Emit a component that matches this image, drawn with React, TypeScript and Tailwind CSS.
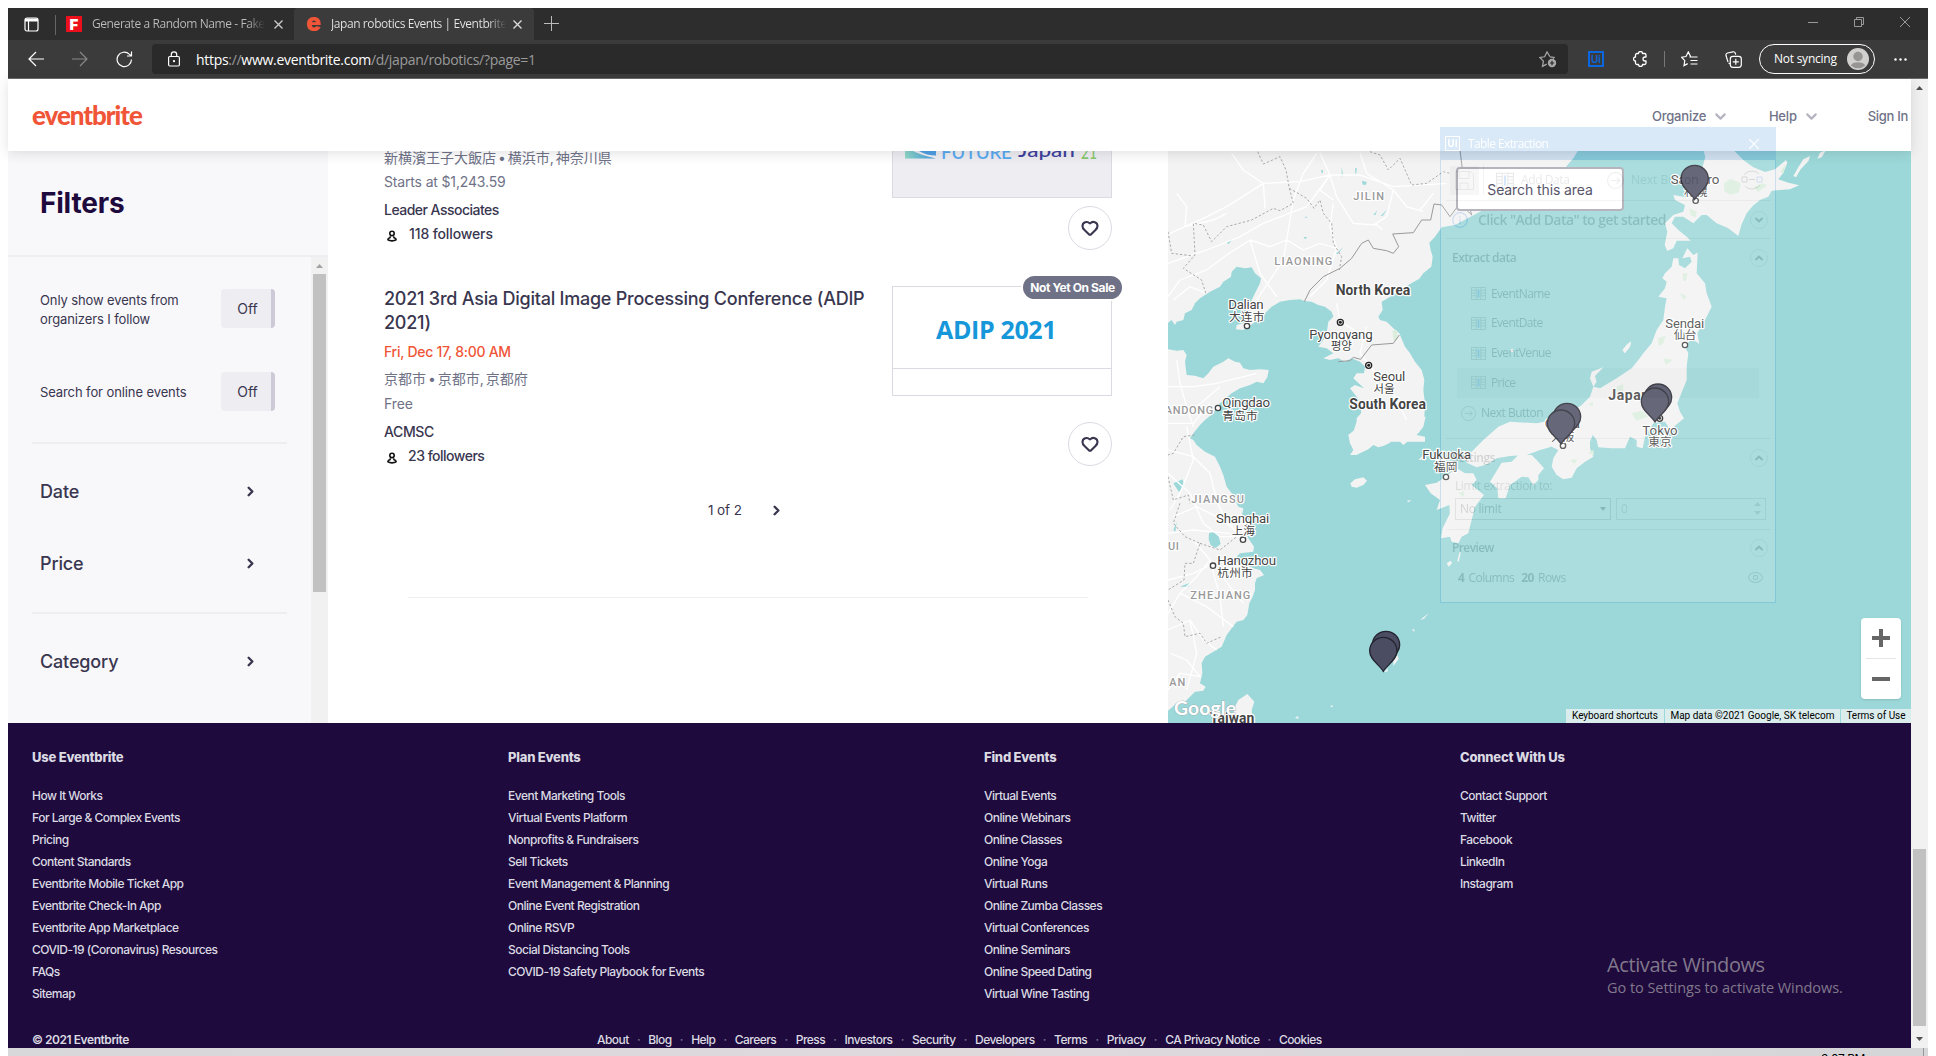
import React from "react";
import { Heart, ChevronRight, ChevronDown, ChevronUp, Eye } from "lucide-react";

const ui = "font-['Open_Sans','Noto_Sans',sans-serif]";

function BrowserChrome() {
  return (
    <div className={`${ui} shrink-0 text-white`}>
      <div className="flex h-8 bg-[#2d2d2d]">
        <div className="flex w-[47px] items-center justify-end border-0">
          <svg className="mr-4 h-[15px] w-[15px]" viewBox="0 0 15 15" fill="none" stroke="#fff" strokeWidth="1.2">
            <rect x="1" y="1" width="13" height="13" rx="2" />
            <path d="M1 3h13" strokeWidth="3" />
            <path d="M4.500 4v10" />
          </svg>
        </div>
        <div className="mt-[7px] h-5 w-px bg-[#666]" />
        <div className="flex w-[238px] items-center pl-[10px]">
          <span className="flex h-4 w-4 items-center justify-center bg-[#ec0f1c] font-['Inter',sans-serif] text-[15px] font-black leading-none">F</span>
          <span className="ml-[10px] w-[173px] overflow-hidden whitespace-nowrap bg-gradient-to-r from-[#bdbdbd] from-90% to-[#2d2d2d] bg-clip-text text-[12px] tracking-[-0.42px] text-transparent">Generate a Random Name - Fake</span>
          <svg className="ml-[9px] h-[9px] w-[9px]" viewBox="0 0 9 9" stroke="#ccc" strokeWidth="1.3"><path d="M.5.5l8 8M8.500.5l-8 8" /></svg>
        </div>
        <div className="flex w-[240px] items-center rounded-t bg-[#3b3b3b] pl-3">
          <svg className="h-[16px] w-[15px]" viewBox="0 0 15 16">
            <text x="0" y="15" textLength="15" lengthAdjust="spacingAndGlyphs" fontFamily="Inter, sans-serif" fontWeight="900" fontSize="25" fill="#f05537">e</text>
          </svg>
          <span className="ml-[10px] w-[175px] overflow-hidden whitespace-nowrap bg-gradient-to-r from-[#e8e8e8] from-90% to-[#3b3b3b] bg-clip-text text-[12px] tracking-[-0.42px] text-transparent">Japan robotics Events | Eventbrite</span>
          <svg className="ml-[7px] h-[9px] w-[9px]" viewBox="0 0 9 9" stroke="#ddd" strokeWidth="1.300"><path d="M.5.5l8 8M8.500.5l-8 8" /></svg>
        </div>
        <svg className="ml-[10px] mt-[8px] h-[15px] w-[15px]" viewBox="0 0 15 15" stroke="#bbb"><path d="M7.500 0v15M0 7.500h15" /></svg>
        <div className="ml-auto mr-[18px] flex items-center gap-[36px] pb-1">
          <svg className="h-[10px] w-[10px]" viewBox="0 0 10 10" stroke="#999"><path d="M0 5.500h10" /></svg>
          <svg className="h-[10px] w-[10px]" viewBox="0 0 10 10" fill="none" stroke="#999"><path d="M.5 2.500h7v7h-7zM2.500 2.500v-2h7v7h-2" /></svg>
          <svg className="h-[10px] w-[10px]" viewBox="0 0 10 10" stroke="#999"><path d="M0 0l10 10M10 0L0 10" /></svg>
        </div>
      </div>
      <div className="flex h-[39px] items-start border-b border-[#6b6b6b] bg-[#3b3b3b] pt-1">
        <div className="flex h-[30px] w-[144px] items-center pl-5">
          <svg className="h-4 w-4" viewBox="0 0 16 16" fill="none" stroke="#fff" strokeWidth="1.200"><path d="M16 8H1M8 1L1 8l7 7" /></svg>
          <svg className="ml-7 h-4 w-4" viewBox="0 0 16 16" fill="none" stroke="#888" strokeWidth="1.200"><path d="M0 8h15M8 1l7 7-7 7" /></svg>
          <svg className="ml-7 h-[17px] w-[17px]" viewBox="0 0 17 17" fill="none" stroke="#fff" strokeWidth="1.200"><path d="M15.500 8.500a7.200 7.200 0 1 1-2.300-5.400L15.500 5M15.500.5V5H11" /></svg>
        </div>
        <div className="flex h-[30px] w-[1416px] items-center rounded bg-[#2a2a2a] pl-4 pr-[11px]">
          <svg className="h-4 w-3" viewBox="0 0 12 16" fill="none" stroke="#fff" strokeWidth="1.200"><rect x=".6" y="5.500" width="10.800" height="9.500" rx="1.200" /><path d="M3.300 5.500V3.500a2.700 2.700 0 0 1 5.400 0v2" /><circle cx="6" cy="10.200" r=".5" fill="#fff" /></svg>
          <span className="ml-4 whitespace-nowrap text-[14px] tracking-[-0.3px] text-[#9a9a9a]"><span className="text-white">https</span>://<span className="text-white">www.eventbrite.com</span>/d/japan/robotics/?page=1</span>
          <svg className="ml-auto h-[17px] w-[18px]" viewBox="0 0 18 17" fill="none" stroke="#aaa" strokeWidth="1.200"><path d="M11 5.800L8 .9 5.600 5.800.8 6.500l3.600 3.700-.9 5.200 4.200-2.300M11 5.800l4 .7-1 1" /><circle cx="13" cy="12" r="4.200" fill="#aaa" stroke="none" /><path d="M13 9.800v4.400M10.800 12h4.400" stroke="#2a2a2a" /></svg>
        </div>
        <div className="flex h-[30px] flex-1 items-center">
          <span className="ml-5 flex h-4 w-4 items-center justify-center border-2 border-[#0a67df] font-['Inter',sans-serif] text-[10px] font-semibold text-[#0a67df]">Ui</span>
          <svg className="ml-[29px] h-[16px] w-[15px]" viewBox="0 0 15 16" fill="none" stroke="#fff" strokeWidth="1.300" strokeLinejoin="round"><path d="M4 2.500h1.500a2 2 0 0 1 4 0h2a1.500 1.500 0 0 1 1.500 1.500v2h-1a1.900 1.900 0 0 0 0 4h1v2a1.500 1.500 0 0 1-1.500 1.500h-2a2 2 0 0 1-4 0H4A1.500 1.500 0 0 1 2.500 12v-2a2 2 0 0 1 0-4V4A1.500 1.500 0 0 1 4 2.500z" /></svg>
          <div className="ml-[16px] h-4 w-px bg-[#777]" />
          <svg className="ml-[16px] h-[17px] w-[17px]" viewBox="0 0 17 17" fill="none" stroke="#fff" strokeWidth="1.200"><path d="M9.600 5.500L7.300.9 5 5.500.6 6.200l3.200 3.400-.8 5 3.700-2M8.500 6h8M9.500 9.500h7M9.500 13h7" /></svg>
          <svg className="ml-[27px] h-[17px] w-[17px]" viewBox="0 0 17 17" fill="none" stroke="#fff" strokeWidth="1.200"><path d="M3 11L1 4.500C.7 3 1 2.500 2.500 2L8 .8c1.500-.3 2 .2 2.400 1.700l.3 1.200M5.500 13l-2-1" /><rect x="5.300" y="5.300" width="11" height="11" rx="2.500" /><path d="M10.800 7.800v6M7.800 10.800h6" /></svg>
          <div className="ml-[17px] flex h-[30px] w-[116px] items-center rounded-full border border-white pl-[14px] text-[12px] tracking-[-0.25px]">
            <span className="whitespace-nowrap">Not syncing</span>
            <svg className="ml-auto mr-[5px] h-[22px] w-[22px]" viewBox="0 0 22 22"><circle cx="11" cy="11" r="11" fill="#d2d0ce" /><circle cx="11" cy="8.500" r="4.700" fill="#979593" /><path d="M3.800 17.500c2-4.200 12.400-4.200 14.400 0a11 11 0 0 1-14.400 0" fill="#979593" /></svg>
          </div>
          <svg className="ml-[19px] h-[3px] w-[13px]" viewBox="0 0 13 3" fill="#fff"><circle cx="1.500" cy="1.500" r="1.200" /><circle cx="6.500" cy="1.500" r="1.200" /><circle cx="11.500" cy="1.500" r="1.200" /></svg>
        </div>
      </div>
    </div>
  );
}

function SiteHeader() {
  return (
    <header className="relative z-10 flex h-[72px] shrink-0 items-center bg-white pt-[3px] text-[13px] font-medium text-[#6f7287] shadow-[0_2px_12px_rgba(40,44,53,0.14)]">
      <span className="ml-6 pb-[4px] font-['Lato',sans-serif] text-[26px] font-black leading-none tracking-[-1.05px] text-[#f05537]">eventbrite</span>
      <span className="ml-auto w-[54px] tracking-[-0.2px]">Organize</span>
      <ChevronDown className="ml-[6px] h-[17px] w-[17px] text-[#b5b3c0]" strokeWidth={3} />
      <span className="ml-[40px] tracking-[-0.2px]">Help</span>
      <ChevronDown className="ml-[6px] h-[17px] w-[17px] text-[#b5b3c0]" strokeWidth={3} />
      <span className="ml-[48px] mr-[3px] tracking-[-0.3px]">Sign In</span>
    </header>
  );
}

function Toggle() {
  return <span className="flex h-[39px] w-[54px] items-center justify-center rounded border-r-4 border-[#cdc9d6] bg-[#eeedf2] pl-[3px] text-[14px] tracking-normal">Off</span>;
}

function FilterRow({ label, className }: { label: string; className: string }) {
  return (
    <div className={`flex items-center pl-8 pr-[53px] text-[18px] font-medium tracking-[-0.15px] ${className}`}>
      {label}
      <ChevronRight className="ml-auto h-[15px] w-[15px]" strokeWidth={3.800} />
    </div>
  );
}

function Filters() {
  return (
    <aside className="flex w-[320px] shrink-0 flex-col bg-[#f8f7fa] text-[#39364f]">
      <div className="flex h-[106px] items-center border-b-2 border-[#eeedf2] pl-8">
        <h2 className="text-[28px] font-bold leading-none tracking-[-0.2px] text-[#1e0a3c]">Filters</h2>
      </div>
      <div className="flex flex-1">
        <div className="flex w-[303px] flex-col">
          <div className="mt-8 flex h-[39px] items-center justify-between pl-8 pr-9 text-[13px] leading-[19px] tracking-[-0.12px]">
            <span className="pt-[3px]">Only show events from<br />organizers I follow</span>
            <Toggle />
          </div>
          <div className="mt-11 flex h-[39px] items-center justify-between pl-8 pr-9 text-[13px] tracking-[-0.1px]">
            <span className="pt-[2px]">Search for online events</span>
            <Toggle />
          </div>
          <div className="ml-6 mt-[31px] h-[2px] w-[255px] bg-[#eeedf2]" />
          <FilterRow label="Date" className="mt-[27px] h-10" />
          <FilterRow label="Price" className="mt-8 h-10" />
          <div className="ml-6 mt-[29px] h-[2px] w-[255px] bg-[#eeedf2]" />
          <FilterRow label="Category" className="mt-[27px] h-10" />
        </div>
        <div className="flex w-[17px] flex-col items-center bg-[#f1f1f1]">
          <svg className="mt-[7px] h-1 w-[7px]" viewBox="0 0 7 4"><path d="M0 4L3.500 0 7 4z" fill="#a3a3a3" /></svg>
          <div className="mt-[6px] h-[318px] w-[13px] bg-[#c1c1c1]" />
        </div>
      </div>
    </aside>
  );
}

function Followers({ children }: { children: React.ReactNode }) {
  return (
    <div className="-mt-px flex h-6 items-center font-medium">
      <svg className="ml-[3px] mt-[5px] h-3 w-[10px]" viewBox="0 0 10 12" fill="none" stroke="#111" strokeWidth="1.600"><circle cx="5" cy="3.400" r="2.200" /><path d="M3.600 6.400L2.800 7.800C1.300 8.300.8 9 1 9.900c1.800 1.300 6.200 1.300 8 0 .2-.9-.3-1.600-1.800-2.100l-.8-1.400" /></svg>
      {children}
    </div>
  );
}

function HeartButton() {
  return (
    <span className="flex h-11 w-11 items-center justify-center rounded-full border border-[#dbdae3] bg-white">
      <Heart className="-mt-px h-[18px] w-[18px] text-[#39364f]" strokeWidth={2.800} />
    </span>
  );
}

function Results() {
  return (
    <main className="flex w-[840px] shrink-0 flex-col overflow-hidden bg-white text-[14px] text-[#39364f]">
      <div className="flex h-[107px] justify-between pl-14 pr-14">
        <div>
          <p className="-mt-[5px] h-6 font-['Inter','Noto_Sans_CJK_JP',sans-serif] leading-6 text-[#6f7287] [word-spacing:-2px]">新横濱王子大飯店 • 横浜市, 神奈川県</p>
          <p className="h-6 leading-6 tracking-[-0.16px] text-[#6f7287]">Starts at $1,243.59</p>
          <p className="mt-1 h-6 font-medium leading-6 tracking-[-0.52px]">Leader Associates</p>
          <Followers><span className="ml-3 tracking-[-0.12px]">118 followers</span></Followers>
        </div>
        <div className="flex w-[220px] flex-col items-end">
          <div className="h-[47px] w-full overflow-hidden border border-t-0 border-[#dbdae3] bg-[#eeedf2]">
            <svg className="h-5 w-full" viewBox="893 151 218 20">
              <defs><linearGradient id="swoosh"><stop offset="0" stopColor="#8fd8c8" /><stop offset="1" stopColor="#3f97e0" /></linearGradient></defs>
              <path d="M905 151h8q8 4 23 7.500h-31z" fill="url(#swoosh)" />
              <path d="M919 151h17v4.500q-9 0-17-4.500" fill="#4c9fe4" />
              <g fontFamily="Lato, sans-serif" fontSize="19" fontWeight="500">
                <text x="941" y="158.500" textLength="71" fill="#56a9f0">FUTURE</text>
                <text x="1018" y="157" textLength="57" lengthAdjust="spacingAndGlyphs" fill="#3d3f9d">Japan</text>
                <text x="1081" y="159" textLength="16" lengthAdjust="spacingAndGlyphs" fill="#86c867">21</text>
              </g>
            </svg>
          </div>
          <div className="mt-2"><HeartButton /></div>
        </div>
      </div>
      <div className="mt-7 flex h-[182px] justify-between pl-14 pr-14">
        <div>
          <h3 className="w-[490px] pt-[1px] text-[18px] font-medium leading-6 tracking-[-0.24px]">2021 3rd Asia Digital Image Processing Conference (ADIP 2021)</h3>
          <p className="mt-[5px] h-6 font-medium leading-6 tracking-[-0.28px] text-[#f05537]">Fri, Dec 17, 8:00 AM</p>
          <p className="mt-[3px] h-6 font-['Inter','Noto_Sans_CJK_JP',sans-serif] leading-6 text-[#6f7287] [word-spacing:-2px]">京都市 • 京都市, 京都府</p>
          <p className="mt-px h-6 leading-6 tracking-[-0.1px] text-[#6f7287]">Free</p>
          <p className="mt-1 h-6 font-medium leading-6 tracking-[-0.4px]">ACMSC</p>
          <Followers><span className="ml-[11px] tracking-[-0.5px]">23 followers</span></Followers>
        </div>
        <div className="relative flex w-[220px] flex-col items-end">
          <span className="absolute -right-[12px] -top-[12px] flex h-[27px] w-[103px] items-center justify-center rounded-full border-2 border-white bg-[#6f7287] text-[12px] font-bold tracking-[-0.38px] text-white">Not Yet On Sale</span>
          <div className="h-[110px] w-full border border-[#dbdae3]">
            <div className={`${ui} flex h-[82px] items-center border-b border-[#dbdae3] pl-[43px] pt-[5px] text-[25px] font-bold tracking-[-0.35px] text-[#1597da]`}>ADIP 2021</div>
          </div>
          <div className="mt-[26px]"><HeartButton /></div>
        </div>
      </div>
      <div className="mt-[30px] flex h-6 items-center pl-[380px] text-[13.500px] tracking-[-0.1px]">
        1 of 2 <ChevronRight className="ml-[27px] h-[15px] w-[15px]" strokeWidth={3.800} />
      </div>
      <div className="ml-20 mt-[75px] h-px w-[680px] bg-[#eeedf2]" />
    </main>
  );
}

function Pin({ x, y }: { x: number; y: number }) {
  return <path transform={`translate(${x} ${y})`} d="M0 0C-12 -20 -41 -35 -41 -61A41 41 0 0 1 41 -61C41 -35 12 -20 0 0Z" fill="#4b4d63" stroke="#24242f" strokeWidth="4" />;
}

type Label = { x: number; y: number; w: number; t: string; k?: "bold" | "area" };
const labels: Label[] = [
  { x: 580, y: 180, w: 92, t: "JILIN", k: "area" },
  { x: 343, y: 375, w: 174, t: "LIAONING", k: "area" },
  { x: 14, y: 823, w: 146, t: "ANDONG", k: "area" },
  { x: 94, y: 1088, w: 158, t: "JIANGSU", k: "area" },
  { x: 24, y: 1231, w: 33, t: "UI", k: "area" },
  { x: 91, y: 1376, w: 180, t: "ZHEJIANG", k: "area" },
  { x: 28, y: 1637, w: 48, t: "AN", k: "area" },
  { x: 527, y: 465, w: 224, t: "North Korea", k: "bold" },
  { x: 568, y: 807, w: 230, t: "South Korea", k: "bold" },
  { x: 1345, y: 780, w: 122, t: "Japan", k: "bold" },
  { x: 150, y: 1749, w: 133, t: "Taiwan", k: "bold" },
  { x: 205, y: 506, w: 106, t: "Dalian" },
  { x: 207, y: 542, w: 106, t: "大连市" },
  { x: 448, y: 597, w: 190, t: "Pyongyang" },
  { x: 512, y: 630, w: 64, t: "평양" },
  { x: 640, y: 723, w: 96, t: "Seoul" },
  { x: 640, y: 759, w: 64, t: "서울" },
  { x: 187, y: 802, w: 143, t: "Qingdao" },
  { x: 187, y: 840, w: 106, t: "青岛市" },
  { x: 168, y: 1149, w: 160, t: "Shanghai" },
  { x: 215, y: 1184, w: 70, t: "上海" },
  { x: 172, y: 1275, w: 176, t: "Hangzhou" },
  { x: 172, y: 1310, w: 106, t: "杭州市" },
  { x: 787, y: 956, w: 146, t: "Fukuoka" },
  { x: 822, y: 994, w: 70, t: "福岡" },
  { x: 1532, y: 132, w: 146, t: "Sapporo" },
  { x: 1572, y: 168, w: 70, t: "札幌" },
  { x: 1516, y: 563, w: 117, t: "Sendai" },
  { x: 1541, y: 598, w: 68, t: "仙台" },
  { x: 1447, y: 884, w: 106, t: "Tokyo" },
  { x: 1465, y: 919, w: 70, t: "東京" },
  { x: 1154, y: 865, w: 106, t: "Osaka" },
  { x: 1173, y: 902, w: 70, t: "大阪" },
];

const dots = [[261, 558], [174, 804], [249, 1199], [159, 1277], [858, 1011], [1607, 182], [1575, 615], [1209, 917]];
const capitals = [[541, 547], [626, 676], [1499, 835]];

/* Map drawing; the inner group uses thirds of a pixel with its origin at page point 1160,140. */
function MapCanvas() {
  return (
    <svg className="block h-full w-full" viewBox="1168 151 743 572">
      <rect x="1168" y="151" width="743" height="572" fill="#9cd8d9" />
      <g transform="translate(1160 140) scale(.33333)">
        <g fill="#f3f3f3">
          <path d="M24 30H1255L1240 55L1218 80L1150 160L1050 175L960 215L885 255L845 262L825 290L808 308L812 330L818 350L814 380L790 400L778 416L750 432L700 465L665 485L668 510L655 530L660 540L680 545L700 565L718 580L735 620L750 640L765 665L785 690L793 720L790 750L795 790L793 830L785 860L770 885L795 890V905H590L565 885L590 865L590 835L603 820L605 790L590 770L570 745L585 735L612 745L580 715L590 700L612 700L615 680L600 665L575 655L555 665L535 655L510 660L490 655L520 640L500 625L475 620L490 600L500 580L505 545L520 530L515 515L495 500L475 495L455 485L433 483L420 478L390 480L360 485L335 500L320 515L300 530L280 550L250 570L228 568L230 555L250 550L265 535L268 510L275 480L285 460L300 430L303 415L285 400L275 382L255 385L230 380L215 395L213 410L190 425L180 440L150 455L120 475L105 490L95 510L75 520L70 540L50 545L45 555L35 540L24 548Z" />
          <path d="M24 628L50 632L70 630L80 645L75 665L78 690L80 705L105 707L130 715L145 700L160 680L190 665L205 655L225 665L240 668L250 685L270 690L300 688L326 690L322 712L310 730L290 725L270 735L240 745L215 760L190 780L175 795L160 820L135 840L120 855L100 880L90 895L100 900L110 915L135 935L165 950L180 980L190 1005L200 1040L215 1060L225 1080L235 1100L250 1105L245 1130L270 1150L258 1180L265 1195L282 1220L280 1235L240 1240L215 1265L245 1270L280 1285L300 1290L312 1305L290 1315L285 1330L285 1350L278 1370L268 1390L262 1425L250 1440L230 1445L215 1465L200 1485L185 1520L160 1535L135 1550L125 1570L127 1600L120 1630L137 1640L130 1652L105 1655L90 1670L75 1685L50 1690L24 1712Z" />
          <path d="M590 845L580 875L565 885L570 910L580 930L570 945L590 945L600 940L625 928L640 915L655 922L670 918L690 908L700 895L715 900L730 915L742 905L745 890L775 880L790 860L797 830Z" />
          <path d="M571 1030L585 1018L610 1012L621 1022L610 1035L590 1043L575 1040Z" />
          <path d="M213 1750L225 1700L235 1680L262 1662L283 1685L275 1710L278 1750Z" />
          {/* Hokkaido */}
          <path d="M1630 30H1720L1750 60L1780 82L1815 96L1845 88L1878 60L1882 68L1870 98L1855 118L1885 128L1918 136L1890 148L1860 150L1835 152L1825 170L1800 180L1778 198L1760 220L1744 255L1735 288L1705 265L1670 250L1640 225L1625 225L1600 250L1570 230L1545 230L1535 250L1555 270L1580 290L1592 302L1550 302L1540 325L1522 333L1514 315L1522 275L1515 250L1540 225L1570 215L1575 195L1545 180L1540 165L1570 170L1600 170L1630 140L1640 110L1628 80L1636 50Z" />
          <path d="M1998 30L1985 52L1972 56L1980 38ZM1930 58L1950 48L1946 62L1922 88L1908 112L1900 108L1915 82Z" />
          {/* Honshu */}
          <path d="M1540 355L1535 380L1515 400L1507 415L1520 425L1515 445L1495 470L1520 475L1515 500L1510 540L1490 570L1475 610L1450 640L1435 660L1415 685L1370 715L1320 745L1300 740L1310 725L1305 708L1330 682L1295 695L1290 715L1300 740L1290 770L1265 795L1230 820L1180 840L1130 850L1050 845L1015 860L970 900L935 935L915 945L920 968L950 982L985 972L1010 955L1050 948L1100 945L1140 930L1175 920L1195 930L1180 955L1175 980L1190 1005L1210 1018L1235 1013L1250 985L1275 965L1300 950L1290 925L1290 905L1298 885L1310 900L1315 922L1355 925L1395 925L1410 890L1430 900L1430 920L1448 925L1455 890L1480 850L1515 845L1525 860L1510 885L1530 870L1572 835L1560 815L1552 790L1580 720L1580 680L1585 640L1575 620L1595 595L1618 612L1612 580L1635 540L1655 500L1640 460L1635 430L1610 400L1613 338L1600 345L1582 325L1567 355L1590 350L1595 365L1575 385L1557 375L1555 355Z" />
          {/* Shikoku and Kyushu */}
          <path d="M990 1025L1015 985L1025 968L1055 965L1075 945L1115 945L1130 960L1152 985L1135 1005L1135 1020L1120 1035L1105 1012L1085 1010L1050 1035L1037 1075L1015 1075L1012 1045Z" />
          <path d="M795 1035L830 1028L850 1015L890 985L915 1000L940 1000L950 1020L935 1035L972 1065L945 1100L935 1140L925 1180L905 1190L895 1210L875 1205L870 1190L843 1195L848 1165L870 1120L868 1095L830 1110L840 1080L812 1060Z" />
          <path d="M775 960L795 940L800 958ZM740 1083l14-4l-8 8zM860 1270l12-8l4 8l-10 10zM892 1262l8-30l2 10l-6 24zM1395 640l-8-10l15-18l12-8l-4 16zM1052 628h8v8h-8zM780 1440L806 1420L792 1436zM756 1470l6-4l2 10zM700 1560l12-16l4 12l-16 22zM672 1595l12-10l-2 10zM733 1503l8-4zM510 1700l6-5l4 5zM405 1734l8-6l4 8zM432 1728l5-4z" />
        </g>
        <g fill="#9cd8d9">
          <path d="M147 1180l12-6l15 8l8 30l-15 12l-15-8l-6-18zM606 122l14 4l-2 8h-10zM40 1030l28-12l4 18l-15 20l-10-15zM60 1340l30-12l-5 12zM640 225l12-14l-6 14zM662 228l20-20l-14 20zM484 90h5v8h-5zM545 80l4 24l-4 8zM585 85h6l-4 24zM200 308l18-10l-12 14zM430 292l12-2l-6 8zM435 228l8 6h-6zM40 1170l10-24l-4 30zM110 1120l26-2zM528 342l22-22l-16 22z" />
          <path d="M1155 935l20-18l-6 14z" />
        </g>
        <g fill="#dbeedd">
          <path d="M697 572l14-2l2 28l-12 6zM1692 130l20-14l30 14l-6 28l-26 6l-18-12zM1782 140l26-10l14 6l-28 20zM1588 205l22 10l-4 18l-14-8zM1568 400h14l-4 24l-8-2zM1560 460l20 8l-8 12zM1495 595l22-8l-8 24l-14 6zM1510 655l28 4l-20 16zM1370 740l20-8v26l-22 10zM1410 760h30l-10 18zM1415 820l30-8l20 18l-36 12zM1230 960l22-2l-8 14zM1284 938l16-8l2 16zM896 1058l18-4l-4 18zM1285 795l14-12v14zM1862 95l14-24l-6 30z" />
        </g>
        <g fill="none" stroke="#fff" strokeWidth="4">
          <path d="M30 280L130 235L200 200L310 130L420 125L510 105L600 105L700 140L860 130M215 40L250 90L310 130L315 205M470 40L430 100L400 180L380 300M50 160L80 200L75 260L160 240L200 220M510 105L530 170L580 250L650 255L668 270M480 40L510 105L480 150L520 180M24 370L140 330L240 290L310 250L440 200L510 105M380 300L330 320L270 300L200 345L140 390L60 420L24 470M380 300L430 330L480 310L530 325M380 300L370 360L330 420L290 480M270 300L300 400L350 470M520 190L510 260L530 325L500 420L450 470M600 40L620 100L700 150L740 200L790 215M700 150L680 230L640 255M820 160L780 210M40 480L90 440L140 460M530 490L540 545L600 580M620 560L600 640L640 690L700 760L740 840M24 740L100 740L170 730L290 700M50 660L60 730L80 800L100 860M110 800L180 740M24 850L100 850L150 790" />
          <path d="M24 930L100 950L150 1000L170 1080L200 1150L260 1200M24 1000L90 1060L130 1150L180 1190L240 1190M80 860L100 960L60 1060L30 1110M24 1180L100 1170L210 1180M40 1130L110 1100L170 1130L220 1160M100 1200L150 1260L110 1310L60 1360L24 1420M160 1270L210 1340L250 1390M150 1260L180 1370L190 1460M24 1320L100 1300L160 1270M60 1360L140 1400L220 1460M24 1470L90 1440L130 1500L170 1530M30 1540L80 1560L120 1610L60 1600L24 1650M90 1440L110 1540L80 1650" />
        </g>
        <g fill="none" stroke="#aaa" strokeWidth="3" strokeDasharray="7 6">
          <path d="M293 35L310 72L360 50L378 90L388 145L400 190L360 212L340 205L275 240L200 260L155 305L130 255L100 250L105 345L70 385L125 420L138 462M24 275L35 340L100 348M388 145L440 175L462 205L480 180L490 220L515 250L520 310L545 350L538 390M630 35L660 45L685 90L720 55L755 135L800 130L850 95L870 100" />
          <path d="M104 885L70 890L40 940L24 945M24 1010L40 1080L85 1065L90 1090M60 1090L40 1150L75 1190L120 1210L100 1270L75 1270L72 1320L24 1350M120 1210L180 1230L230 1190M24 1380L45 1430L70 1450L75 1490L120 1480L140 1510L185 1490" />
        </g>
        <path d="M433 485L450 450L490 410L540 385L575 355L605 310L625 300L640 325L680 332L700 340L716 320L698 282L760 278L785 240L812 240L822 192L845 195L870 230L900 190L935 225L915 150L900 30M535 665L570 662L580 652L602 658L635 615L700 610L718 585" fill="none" stroke="#999" strokeWidth="3" />
        {dots.map(([x, y]) => <circle key={x} cx={x} cy={y} r="8" fill="#fff" stroke="#444" strokeWidth="4" />)}
        {capitals.map(([x, y]) => <g key={x}><circle cx={x} cy={y} r="9" fill="#fff" stroke="#222" strokeWidth="4" /><circle cx={x} cy={y} r="4.500" fill="#222" /></g>)}
        <g fontFamily="Roboto, 'Noto Sans CJK JP', 'Noto Sans CJK KR', sans-serif" paintOrder="stroke" stroke="#fff" strokeWidth="7" strokeLinejoin="round">
          {labels.map((l) => (
            <text key={l.t} x={l.x} y={l.y} textLength={l.w} fontSize={l.k === "area" ? 33 : l.k === "bold" ? 42 : /^[A-Z]/.test(l.t) ? 40 : 35} fontWeight={l.k === "bold" ? 700 : l.k === "area" ? 500 : 400} fill={l.k === "area" ? "#999" : "#444"}>{l.t}</text>
          ))}
        </g>
        <Pin x={1604} y={178} />
        <Pin x={1494} y={834} />
        <Pin x={1485} y={846} />
        <Pin x={1221} y={892} />
        <Pin x={1203} y={912} />
        <Pin x={678} y={1576} />
        <Pin x={670} y={1594} />
        <text x="42" y="1725" textLength="186" fontFamily="Lato, sans-serif" fontSize="58" fontWeight="700" fill="#fff" stroke="#999" strokeWidth="2" paintOrder="stroke">Google</text>
      </g>
    </svg>
  );
}

function MapPanel() {
  return (
    <section className="relative w-[743px] shrink-0 overflow-hidden font-['Roboto',sans-serif]">
      <MapCanvas />
      <div className="absolute left-[288px] top-[16px] flex h-11 w-[168px] items-center justify-center rounded border-2 border-[#a9a8b3] bg-white font-['Inter',sans-serif] text-[14px] tracking-[-0.1px] text-[#39364f]">Search this area</div>
      <div className="absolute right-[10px] top-[467px] flex h-[81px] w-10 flex-col items-center rounded-sm bg-white shadow">
        <svg className="mt-[11px] h-[18px] w-[18px]" viewBox="0 0 18 18"><path d="M7 0h4v7h7v4h-7v7H7v-7H0V7h7z" fill="#666" /></svg>
        <div className="mt-[11px] h-px w-[30px] bg-[#e6e6e6]" />
        <div className="mt-[18px] h-1 w-[18px] bg-[#666]" />
      </div>
      <div className="absolute bottom-0 right-0 flex h-[14px] items-center gap-px whitespace-nowrap text-[10px] leading-[14px] text-black">
        <span className="w-[98px] bg-[#dbecec] text-center tracking-[-0.05px]">Keyboard shortcuts</span>
        <span className="w-[175px] bg-[#dbecec] text-center">Map data ©2021 Google, SK telecom</span>
        <span className="w-[70px] bg-[#dbecec] text-center">Terms of Use</span>
      </div>
    </section>
  );
}

function RoundChevron({ up = false }: { up?: boolean }) {
  return (
    <span className="ml-auto flex h-[18px] w-[18px] items-center justify-center rounded-full border border-[#bbb]">
      {up ? <ChevronUp className="h-3 w-3" strokeWidth={4} /> : <ChevronDown className="h-3 w-3" strokeWidth={4} />}
    </span>
  );
}

function ColumnsIcon({ className }: { className: string }) {
  return (
    <svg className={className} viewBox="0 0 16 14" fill="none" stroke="#777"><path d="M.5.500h15v13H.5zM5.500.5v13M10.500.5v13M.5 3.500h5M.5 6.500h5M.5 9.500h5M10.500 3.500h5M10.500 6.500h5M10.500 9.500h5" /><path d="M8 2.500v9" stroke="#0a67df" strokeWidth="2" /></svg>
  );
}

function TableExtraction() {
  return (
    <div className={`${ui} absolute left-[1440px] top-[127px] z-20 flex h-[476px] w-[336px] flex-col border border-[#0072d8] bg-white text-[12px] text-[#1a1a1a] opacity-[0.15]`}>
      <div className="flex h-8 shrink-0 items-center bg-[#0b72d4] pb-px pl-1 text-white">
        <span className="flex h-[15px] w-[15px] items-center justify-center border-[1.500px] border-white text-[10px] font-bold">Ui</span>
        <span className="ml-2 tracking-[-0.6px]">Table Extraction</span>
        <svg className="ml-auto mr-[16px] h-[10px] w-[10px]" viewBox="0 0 10 10" stroke="#fff" strokeWidth="1.200"><path d="M0 0l10 10M10 0L0 10" /></svg>
      </div>
      <div className="mx-[5px] flex h-[41px] shrink-0 items-center border-b border-[#bbb]">
        <span className="ml-1 flex h-[29px] w-[29px] items-center justify-center bg-[#ccc]"><svg className="h-[19px] w-[19px]" viewBox="0 0 19 19" fill="none" stroke="#666"><path d="M.5.5h15l3 3v15H.5zM4 .5v7h10v-7M5 18v-6h8v6" /></svg></span>
        <span className="mx-[4px] h-[30px] w-px bg-[#bbb]" />
        <ColumnsIcon className="ml-[8px] h-[17px] w-[18px]" />
        <span className="ml-[7px] w-[48px] whitespace-nowrap tracking-[-0.4px] text-[#777]">Add Data</span>
        <svg className="ml-[38px] h-[17px] w-[17px]" viewBox="0 0 16 16" fill="none" stroke="#999"><circle cx="8" cy="8" r="7.500" /><path d="M4 8h8M9 5l3 3-3 3" /></svg>
        <span className="ml-[7px] text-[#888]">Next Button</span>
        <svg className="ml-auto mr-[7px] h-5 w-[22px]" viewBox="0 0 22 20" fill="none" stroke="#444"><path d="M1 7h5v5H1zM8 9.500h6M3 5c3-5 12-5 15-1M19 15c-3 5-12 5-15 1" /><path d="M16 7h5v5h-5z" stroke="#0a67df" /></svg>
      </div>
      <div className="mx-[5px] flex h-[38px] shrink-0 items-center border-b border-[#bbb] pr-[2px] text-[14px] font-semibold">
        <svg className="ml-[6px] mr-[10px] h-4 w-4" viewBox="0 0 16 16" fill="none" stroke="#0a67df" strokeWidth="1.300"><circle cx="8" cy="8" r="7.300" /><path d="M8 6.500V12M8 4v1.300" /></svg>
        <span className="whitespace-nowrap tracking-[-0.55px] text-[#333]">Click "Add Data" to get started</span>
        <RoundChevron />
      </div>
      <div className="mx-[5px] mb-[2px] flex h-[38px] shrink-0 items-center pl-[6px] pr-[2px] font-semibold tracking-[-0.5px]">Extract data<RoundChevron up /></div>
      {["EventName", "EventDate", "EventVenue", "Price"].map((name) => (
        <div key={name} className={`mx-4 flex h-[29.670px] shrink-0 items-center pl-[14px] tracking-[-0.65px] ${name === "Price" ? "bg-[#e4e4e4]" : ""}`}>
          <ColumnsIcon className="mr-[5px] h-[13px] w-[15px]" />{name}
        </div>
      ))}
      <div className="mx-[5px] flex h-[41px] shrink-0 items-center border-b border-[#bbb] pb-[9px] pl-[15px] tracking-[-0.5px]">
        <svg className="mr-[5px] h-[15px] w-[15px]" viewBox="0 0 16 16" fill="none" stroke="#777"><circle cx="8" cy="8" r="7.500" /><path d="M4 8h8M9 5l3 3-3 3" /></svg>Next Button
      </div>
      <div className="mx-[5px] flex h-[39px] shrink-0 items-center pl-[6px] pr-[2px] font-semibold tracking-[-0.4px]">Settings<RoundChevron up /></div>
      <div className="ml-[14px] h-5 shrink-0 leading-[16px] tracking-[-0.4px] text-[#555]">Limit extraction to:</div>
      <div className="ml-[14px] flex h-[22px] shrink-0 gap-[5px]">
        <span className="flex w-[156px] items-center justify-between border border-[#888] pl-1 pr-1 tracking-[-0.3px]">No limit<svg className="h-1 w-[6px]" viewBox="0 0 6 4"><path d="M0 0h6L3 4z" /></svg></span>
        <span className="flex w-[150px] items-center justify-between border border-[#aaa] pl-1 pr-1 text-[#888]">0<svg className="h-[13px] w-[7px]" viewBox="0 0 7 13"><path d="M0 4h7L3.500 0zM0 9h7l-3.500 4z" fill="#888" /></svg></span>
      </div>
      <div className="mx-[5px] mt-[9px] flex h-[38px] shrink-0 items-center border-t border-[#bbb] pl-[6px] pr-[2px] font-semibold tracking-[-0.6px]">Preview<RoundChevron up /></div>
      <div className="mx-[5px] flex h-[22px] shrink-0 items-center pl-[12px] pr-[6px] tracking-[-0.5px]"><b className="mr-1">4</b>Columns<b className="ml-[7px] mr-1">20</b>Rows<Eye className="ml-auto h-[17px] w-[17px] text-[#777]" strokeWidth={1.500} /></div>
    </div>
  );
}

const columns: [string, string[]][] = [
  ["Use Eventbrite", ["How It Works", "For Large & Complex Events", "Pricing", "Content Standards", "Eventbrite Mobile Ticket App", "Eventbrite Check-In App", "Eventbrite App Marketplace", "COVID-19 (Coronavirus) Resources", "FAQs", "Sitemap"]],
  ["Plan Events", ["Event Marketing Tools", "Virtual Events Platform", "Nonprofits & Fundraisers", "Sell Tickets", "Event Management & Planning", "Online Event Registration", "Online RSVP", "Social Distancing Tools", "COVID-19 Safety Playbook for Events"]],
  ["Find Events", ["Virtual Events", "Online Webinars", "Online Classes", "Online Yoga", "Virtual Runs", "Online Zumba Classes", "Virtual Conferences", "Online Seminars", "Online Speed Dating", "Virtual Wine Tasting"]],
  ["Connect With Us", ["Contact Support", "Twitter", "Facebook", "LinkedIn", "Instagram"]],
];
const bottomLinks = ["About", "Blog", "Help", "Careers", "Press", "Investors", "Security", "Developers", "Terms", "Privacy", "CA Privacy Notice", "Cookies"];

function Footer() {
  return (
    <footer className="relative flex h-[325px] w-[1903px] shrink-0 flex-col overflow-hidden bg-[#1e0a3c] pl-6 text-[12px] tracking-[-0.5px] text-[#dbdae3]">
      <div className="grid h-[305px] shrink-0 grid-cols-[476px_476px_476px_400px] pt-[24px]">
        {columns.map(([title, links]) => (
          <div key={title}>
            <h4 className="mb-[18px] text-[13px] font-extrabold leading-5 tracking-[-0.22px]">{title}</h4>
            {links.map((l) => <a key={l} className="block h-[22px] font-medium leading-[22px]">{l}</a>)}
          </div>
        ))}
      </div>
      <div className="flex h-[24px] shrink-0 items-center font-medium">
        <span className="w-[565px] font-semibold tracking-[-0.45px]">© 2021 Eventbrite</span>
        {bottomLinks.map((l, i) => (
          <React.Fragment key={l}>
            {i > 0 && <span className="w-[19.500px] text-center text-[#6f7287]">·</span>}
            <span className="tracking-[-0.55px]">{l}</span>
          </React.Fragment>
        ))}
      </div>
      <div className={`${ui} absolute left-[1599px] top-[227px] whitespace-nowrap tracking-normal text-[#81788c]`}>
        <p className="text-[20px] leading-[30px] tracking-[-0.4px]">Activate Windows</p>
        <p className="text-[14.500px] leading-4 tracking-[-0.05px]">Go to Settings to activate Windows.</p>
      </div>
    </footer>
  );
}

export default function App() {
  return (
    <div className="relative flex h-[1056px] w-[1936px] flex-col overflow-hidden bg-white px-2 pt-2 font-['Inter',sans-serif]">
      <BrowserChrome />
      <div className="flex h-[969px] shrink-0">
        <div className="flex w-[1903px] flex-col">
          <SiteHeader />
          <div className="flex h-[572px] shrink-0">
            <Filters />
            <Results />
            <MapPanel />
          </div>
          <Footer />
        </div>
        <div className="flex w-[17px] flex-col items-center bg-[#f1f1f1]">
          <svg className="mt-[7px] h-1 w-[7px]" viewBox="0 0 7 4"><path d="M0 4L3.500 0 7 4z" fill="#505050" /></svg>
          <div className="mt-[759px] h-[177px] w-[13px] bg-[#c1c1c1]" />
          <svg className="mt-[11px] h-1 w-[7px]" viewBox="0 0 7 4"><path d="M0 0L3.500 4 7 0z" fill="#505050" /></svg>
        </div>
      </div>
      <div className="flex h-2 shrink-0 justify-end overflow-hidden bg-gradient-to-r from-[#d8d7d9] via-[#dfd9dc] to-[#d5d6d8]">
        <span className="mr-[58px] mt-[2px] text-[12px] leading-[18px] tracking-[-0.4px] text-black">3:07 PM</span>
        <span className="mr-[4px] w-px bg-[#999]" />
      </div>
      <TableExtraction />
    </div>
  );
}
